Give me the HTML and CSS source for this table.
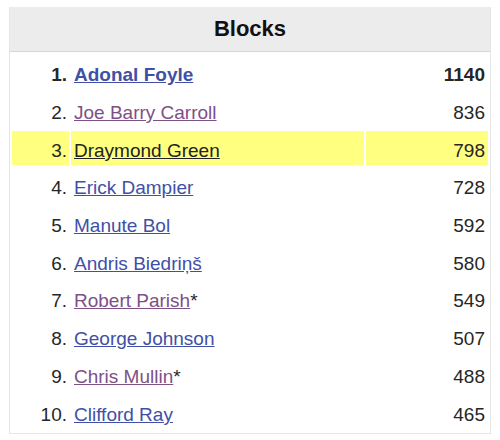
FILE: index.html
```html
<!DOCTYPE html>
<html>
<head>
<meta charset="utf-8">
<link rel="stylesheet" href="styles.css">
</head>
<body>
<div class="box">
  <div class="title">Blocks</div>
  <table class="list">
    <colgroup><col class="c-rank"><col class="c-name"><col class="c-val"></colgroup>
    <tr class="top"><td class="rank">1.</td><td class="name"><a href="#">Adonal Foyle</a></td><td class="val">1140</td></tr>
    <tr><td class="rank">2.</td><td class="name"><a href="#" class="visited">Joe Barry Carroll</a></td><td class="val">836</td></tr>
    <tr class="hl"><td class="rank">3.</td><td class="name"><a href="#">Draymond Green</a></td><td class="val">798</td></tr>
    <tr><td class="rank">4.</td><td class="name"><a href="#">Erick Dampier</a></td><td class="val">728</td></tr>
    <tr><td class="rank">5.</td><td class="name"><a href="#">Manute Bol</a></td><td class="val">592</td></tr>
    <tr><td class="rank">6.</td><td class="name"><a href="#">Andris Biedriņš</a></td><td class="val">580</td></tr>
    <tr><td class="rank">7.</td><td class="name"><a href="#" class="visited">Robert Parish</a>*</td><td class="val">549</td></tr>
    <tr><td class="rank">8.</td><td class="name"><a href="#">George Johnson</a></td><td class="val">507</td></tr>
    <tr><td class="rank">9.</td><td class="name"><a href="#" class="visited">Chris Mullin</a>*</td><td class="val">488</td></tr>
    <tr><td class="rank">10.</td><td class="name"><a href="#">Clifford Ray</a></td><td class="val">465</td></tr>
  </table>
</div>
</body>
</html>
```

FILE: styles.css
```css
html, body {
  margin: 0;
  padding: 0;
  background: #ffffff;
}
body {
  padding: 7px 0 0 9px;
  font-family: "Liberation Sans", Arial, sans-serif;
  color: #262626;
}
.box {
  width: 482px;
  box-sizing: border-box;
  border: 1px solid #e6e6e6;
  border-top: none;
}
.title {
  height: 44px;
  background: #ececec;
  border-bottom: 1px solid #d6d6d6;
  display: flex;
  align-items: center;
  justify-content: center;
  font-size: 22px;
  font-weight: bold;
  color: #111111;
}
.list {
  border-collapse: separate;
  border-spacing: 2px 4px;
  width: 480px;
  table-layout: fixed;
  font-size: 19px;
}
.c-rank { width: 57px; }
.c-name { width: 293px; }
.c-val { width: 122px; }
.list td {
  height: 33.7px;
  padding: 5px 0 0 0;
  box-sizing: border-box;
  white-space: nowrap;
}
.rank {
  text-align: right;
  padding-right: 2px !important;
}
.name {
  padding-left: 3px !important;
}
.val {
  text-align: right;
  padding-right: 3px !important;
}
.list a {
  color: #4050a8;
  text-decoration: underline;
}
.list a.visited {
  color: #7e5086;
}
.top td {
  font-weight: bold;
}
.hl td {
  background: #ffff80;
}
.hl a {
  color: #222222;
}
```
